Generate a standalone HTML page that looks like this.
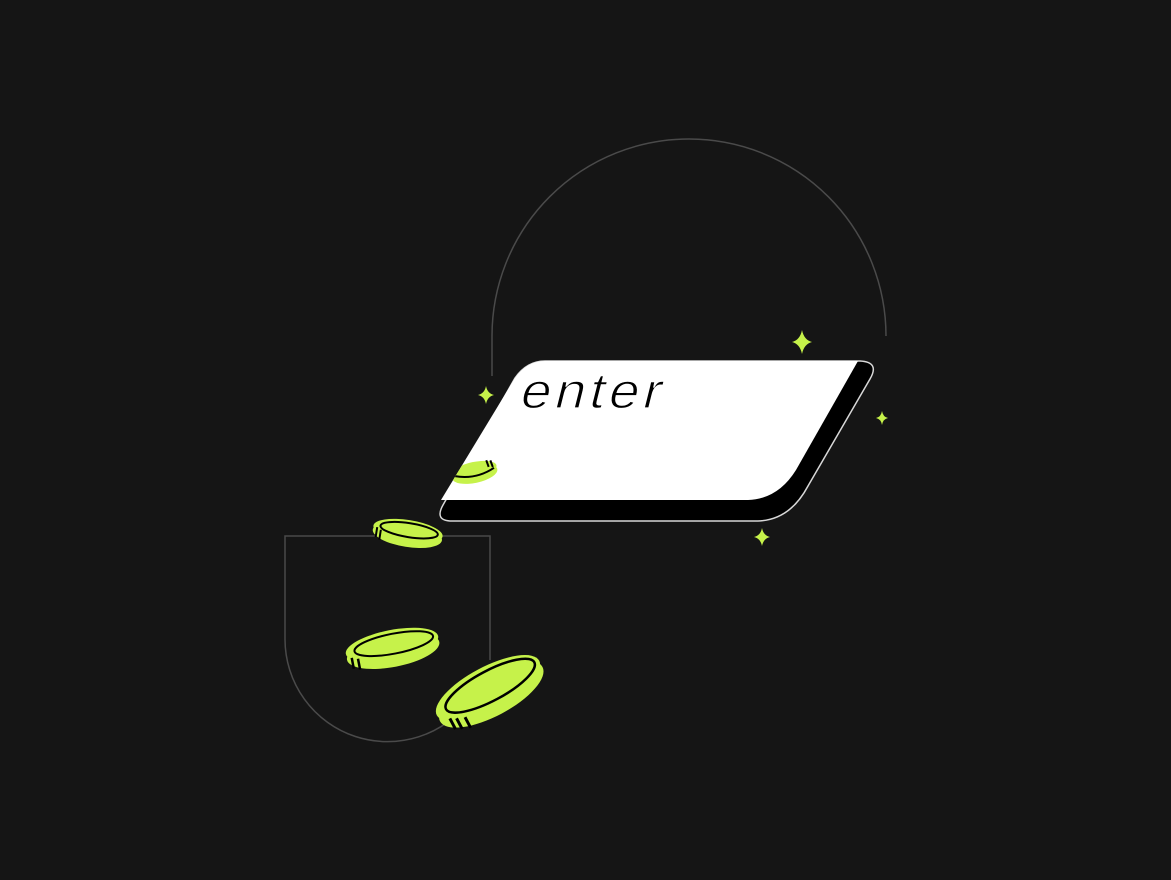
<!DOCTYPE html>
<html><head><style>
html,body{margin:0;padding:0;background:#151515;}
svg{display:block}
</style></head><body>
<svg width="1171" height="880" viewBox="0 0 1171 880" xmlns="http://www.w3.org/2000/svg">
<rect width="1171" height="880" fill="#151515"/>
<path d="M492,376 V336 A197,197 0 0 1 886,336" fill="none" stroke="#4a4a4a" stroke-width="1.5"/>
<path d="M490,660 V536 H285 V639 A102.5,102.5 0 0 0 470,700" fill="none" stroke="#4a4a4a" stroke-width="1.5"/>
<path d="M545,361 H860 Q880,362 870,379 L808,486 Q790,520 758,521 H452 Q434,521 443,505 L515,378 Q527,361 545,361 Z" fill="#000" stroke="#d8d8d8" stroke-width="1.5"/>
<path d="M545,361 H858 L796,470 Q778,499 748,500 H441 L515,378 Q527,361 545,361 Z" fill="#fff"/>
<defs><clipPath id="face"><path d="M545,361 H858 L796,470 Q778,499 748,500 H441 L515,378 Q527,361 545,361 Z"/></clipPath></defs>
<g clip-path="url(#face)">
 <g transform="translate(474,470) rotate(-12)">
  <ellipse cx="0" cy="4" rx="23" ry="9" fill="#c6f24a"/>
  <ellipse cx="0" cy="0" rx="23" ry="8" fill="#c6f24a"/>
  <path d="M-20,2 Q0,10 20,2" fill="none" stroke="#000" stroke-width="2"/>
  <path d="M14,-7 l1,7 M18,-6 l1,7" stroke="#000" stroke-width="2"/>
 </g>
</g>
<text x="0" y="0" transform="translate(518,408) skewX(-14) scale(1.08,1)" font-family="Liberation Sans, sans-serif" font-size="50" letter-spacing="4" fill="#000" stroke="#fff" stroke-width="1.2" paint-order="normal">enter</text>
<g transform="translate(408,531) rotate(9)">
 <ellipse cx="0" cy="4" rx="35" ry="12" fill="#c6f24a"/>
 <ellipse cx="0" cy="0" rx="35" ry="11" fill="#c6f24a"/>
 <ellipse cx="1" cy="-1" rx="29" ry="7" fill="none" stroke="#000" stroke-width="2"/>
 <path d="M-31,1 l0,10 M-27,3 l0,10" stroke="#000" stroke-width="2"/>
</g>
<g transform="translate(392,645) rotate(-11)">
 <ellipse cx="0" cy="6" rx="47" ry="16" fill="#c6f24a"/>
 <ellipse cx="0" cy="0" rx="47" ry="15" fill="#c6f24a"/>
 <ellipse cx="2" cy="-1" rx="40" ry="10" fill="none" stroke="#000" stroke-width="2"/>
 <path d="M-42,5 l0,11 M-36,7 l0,11" stroke="#000" stroke-width="2.5"/>
</g>
<g transform="translate(488,688) rotate(-28)">
 <ellipse cx="0" cy="7" rx="58" ry="22" fill="#c6f24a"/>
 <ellipse cx="0" cy="0" rx="58" ry="21" fill="#c6f24a"/>
 <ellipse cx="3" cy="-1" rx="50" ry="15" fill="none" stroke="#000" stroke-width="2.5"/>
 <path d="M-48,9 l0,12 M-42,12 l0,12 M-34,15 l0,12" stroke="#000" stroke-width="3"/>
</g>
<g fill="#c6f24a">
 <path d="M802,330 Q804,340 812,342 Q804,344 802,354 Q800,344 792,342 Q800,340 802,330Z"/>
 <path d="M486,386 Q487.5,393.5 494,395 Q487.5,396.5 486,404 Q484.5,396.5 478,395 Q484.5,393.5 486,386Z"/>
 <path d="M882,411 Q883,417 888,418 Q883,419 882,425 Q881,419 876,418 Q881,417 882,411Z"/>
 <path d="M762,528 Q763.5,535.5 770,537 Q763.5,538.5 762,546 Q760.5,538.5 754,537 Q760.5,535.5 762,528Z"/>
</g>
</svg>
</body></html>
